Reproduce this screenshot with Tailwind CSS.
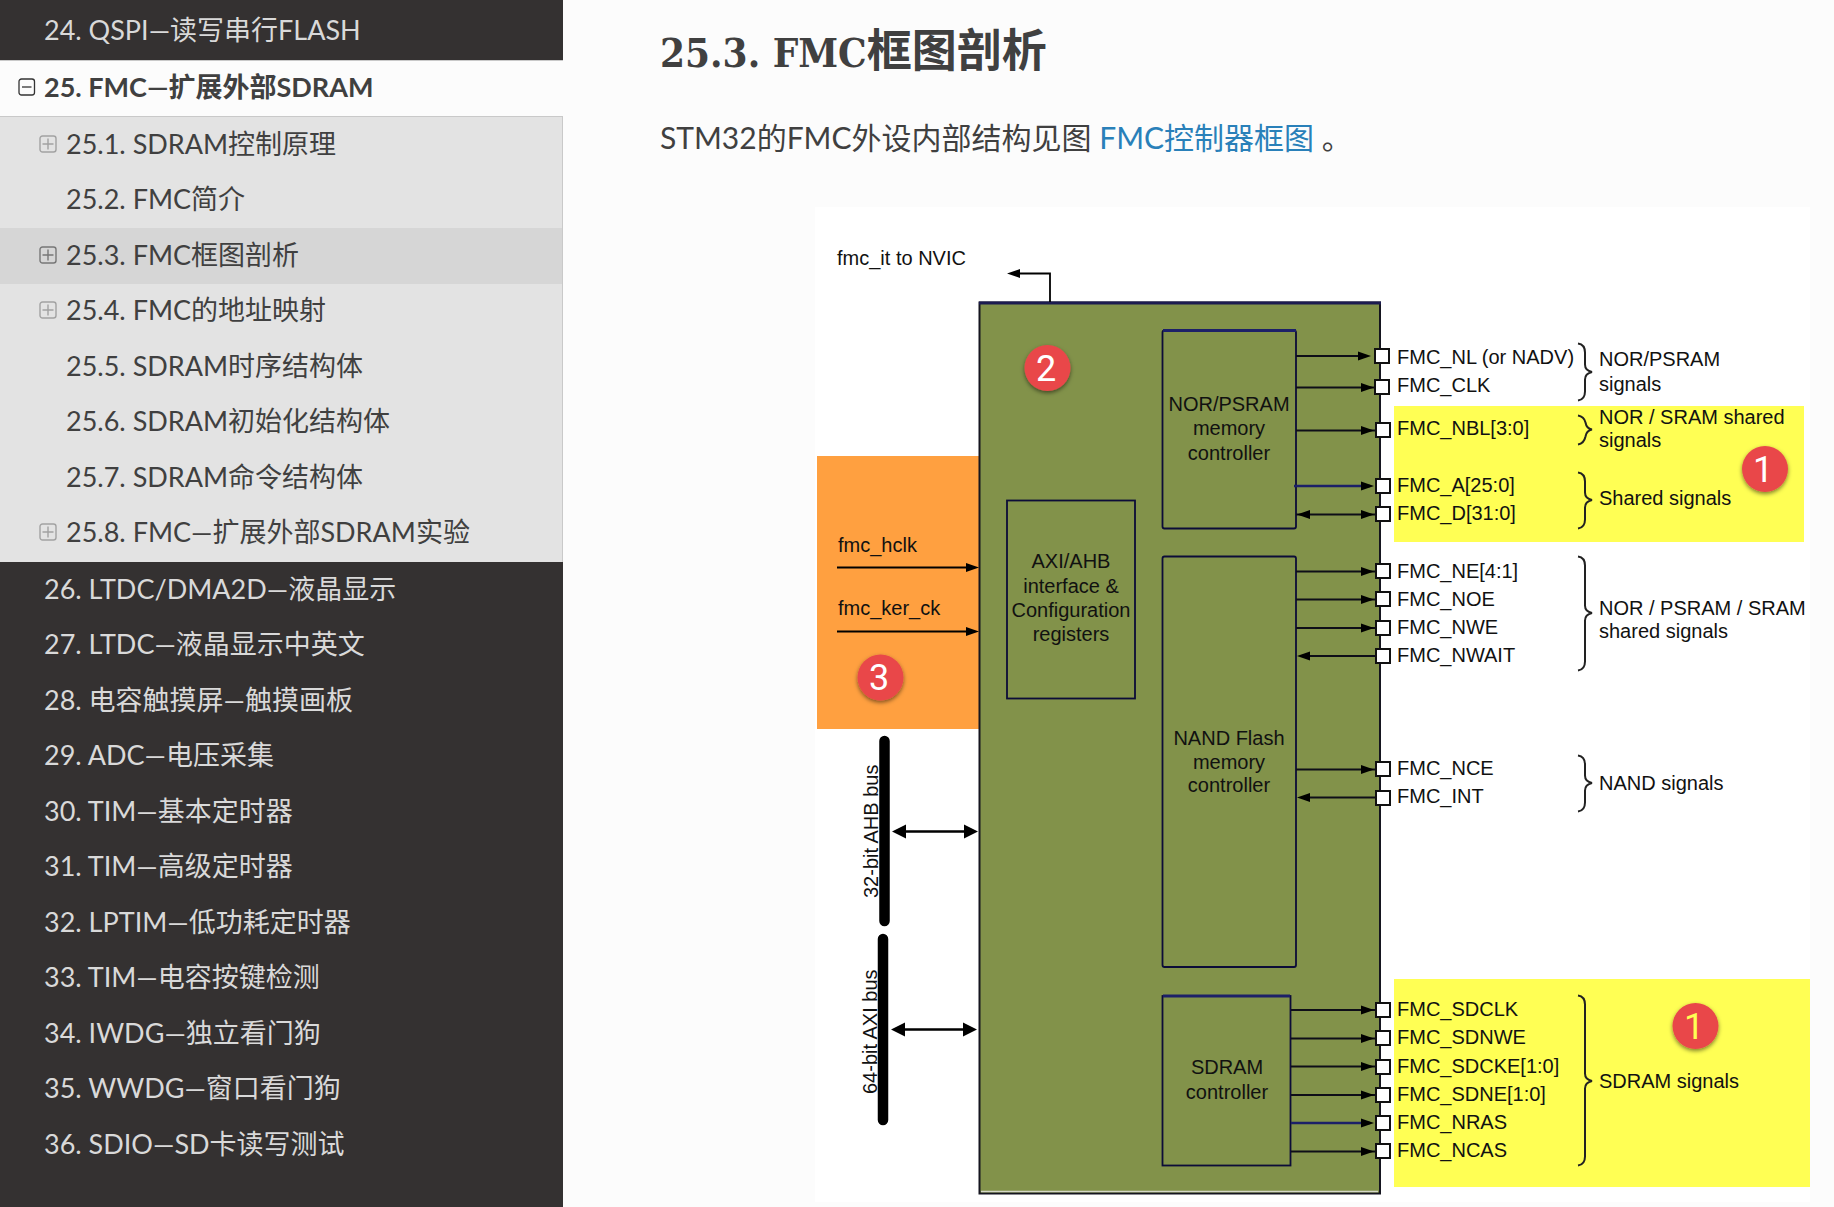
<!DOCTYPE html>
<html lang="zh-CN">
<head>
<meta charset="utf-8">
<meta name="viewport" content="width=device-width, initial-scale=1">
<title>25. FMC—扩展外部SDRAM</title>
<script src="https://cdn.jsdelivr.net/npm/@tailwindcss/browser@4"></script>
</head>
<body class="flex min-h-screen items-stretch bg-[#fcfcfc] font-[Lato,'Noto_Sans_CJK_SC',sans-serif] text-[#404040]">

<nav class="w-[563px] shrink-0 bg-[#343131] text-[27px] leading-[52px]" aria-label="目录">
  <ul>
    <li class="h-[60px] pl-11 text-[#d9d9d9]"><a href="#24" class="block leading-[60px]">24. QSPI—读写串行FLASH</a></li>
    <li>
      <div class="flex h-[57px] items-center border-y border-[#c9c9c9] bg-[#fcfcfc] pb-[3px] pl-[18px] font-bold">
        <button type="button" aria-label="折叠" class="w-[26px]">
          <svg class="block" width="18" height="18" viewBox="0 0 18 18" fill="none" stroke="#333" stroke-width="1.3"><rect x="1" y="1" width="15.5" height="16" rx="2.5"/><path d="M4 9h9.5"/></svg>
        </button>
        <a href="#25">25. FMC—扩展外部SDRAM</a>
      </div>
      <ul class="border-r border-[#c9c9c9] bg-[#e3e3e3] pb-px">
        <li class="flex items-center pb-[3px] pl-[39px] odd:h-[56px] even:h-[55px]">
          <button type="button" aria-label="展开" class="w-[27px]"><svg class="block" width="18" height="18" viewBox="0 0 18 18" fill="none" stroke="#a2a2a2" stroke-width="1.4"><rect x="1" y="1" width="16" height="16" rx="2.5"/><path d="M3.500 9h11M9 3.500v11"/></svg></button>
          <a href="#25-1">25.1. SDRAM控制原理</a></li>
        <li class="flex items-center pb-[3px] pl-[66px] odd:h-[56px] even:h-[55px]"><a href="#25-2">25.2. FMC简介</a></li>
        <li class="flex items-center bg-[#d6d6d6] pb-[3px] pl-[39px] odd:h-[56px] even:h-[55px]">
          <button type="button" aria-label="展开" class="w-[27px]"><svg class="block" width="18" height="18" viewBox="0 0 18 18" fill="none" stroke="#777" stroke-width="1.4"><rect x="1" y="1" width="16" height="16" rx="2.5"/><path d="M3.500 9h11M9 3.500v11"/></svg></button>
          <a href="#25-3">25.3. FMC框图剖析</a></li>
        <li class="flex items-center pb-[3px] pl-[39px] odd:h-[56px] even:h-[55px]">
          <button type="button" aria-label="展开" class="w-[27px]"><svg class="block" width="18" height="18" viewBox="0 0 18 18" fill="none" stroke="#a2a2a2" stroke-width="1.4"><rect x="1" y="1" width="16" height="16" rx="2.5"/><path d="M3.500 9h11M9 3.500v11"/></svg></button>
          <a href="#25-4">25.4. FMC的地址映射</a></li>
        <li class="flex items-center pb-[3px] pl-[66px] odd:h-[56px] even:h-[55px]"><a href="#25-5">25.5. SDRAM时序结构体</a></li>
        <li class="flex items-center pb-[3px] pl-[66px] odd:h-[56px] even:h-[55px]"><a href="#25-6">25.6. SDRAM初始化结构体</a></li>
        <li class="flex items-center pb-[3px] pl-[66px] odd:h-[56px] even:h-[55px]"><a href="#25-7">25.7. SDRAM命令结构体</a></li>
        <li class="flex items-center pb-[3px] pl-[39px] odd:h-[56px] even:h-[55px]">
          <button type="button" aria-label="展开" class="w-[27px]"><svg class="block" width="18" height="18" viewBox="0 0 18 18" fill="none" stroke="#a2a2a2" stroke-width="1.4"><rect x="1" y="1" width="16" height="16" rx="2.5"/><path d="M3.500 9h11M9 3.500v11"/></svg></button>
          <a href="#25-8">25.8. FMC—扩展外部SDRAM实验</a></li>
      </ul>
    </li>
  </ul>
  <ul class="text-[#d9d9d9]">
    <li class="flex items-center pb-[3px] pl-11 odd:h-[56px] even:h-[55px]"><a href="#26">26. LTDC/DMA2D—液晶显示</a></li>
    <li class="flex items-center pb-[3px] pl-11 odd:h-[56px] even:h-[55px]"><a href="#27">27. LTDC—液晶显示中英文</a></li>
    <li class="flex items-center pb-[3px] pl-11 odd:h-[56px] even:h-[55px]"><a href="#28">28. 电容触摸屏—触摸画板</a></li>
    <li class="flex items-center pb-[3px] pl-11 odd:h-[56px] even:h-[55px]"><a href="#29">29. ADC—电压采集</a></li>
    <li class="flex items-center pb-[3px] pl-11 odd:h-[56px] even:h-[55px]"><a href="#30">30. TIM—基本定时器</a></li>
    <li class="flex items-center pb-[3px] pl-11 odd:h-[56px] even:h-[55px]"><a href="#31">31. TIM—高级定时器</a></li>
    <li class="flex items-center pb-[3px] pl-11 odd:h-[56px] even:h-[55px]"><a href="#32">32. LPTIM—低功耗定时器</a></li>
    <li class="flex items-center pb-[3px] pl-11 odd:h-[56px] even:h-[55px]"><a href="#33">33. TIM—电容按键检测</a></li>
    <li class="flex items-center pb-[3px] pl-11 odd:h-[56px] even:h-[55px]"><a href="#34">34. IWDG—独立看门狗</a></li>
    <li class="flex items-center pb-[3px] pl-11 odd:h-[56px] even:h-[55px]"><a href="#35">35. WWDG—窗口看门狗</a></li>
    <li class="flex items-center pb-[3px] pl-11 odd:h-[56px] even:h-[55px]"><a href="#36">36. SDIO—SD卡读写测试</a></li>
  </ul>
</nav>

<main class="min-w-0 flex-1 pr-6 pl-[97px]">
  <h1 class="pt-[18px] text-[45px] leading-[64px] font-bold"><span class="font-['DejaVu_Serif_Condensed','DejaVu_Serif',serif] text-[40px]">25.3. FMC</span>框图剖析</h1>
  <p class="mt-[27px] text-[30px] leading-[50px]">STM32的FMC外设内部结构见图 <a href="#fmc" class="text-[#2980b9]">FMC控制器框图</a> 。</p>

  <figure id="fmc" class="mt-[45px] ml-auto max-w-[995px]">
    <svg class="block w-full font-['Liberation_Sans',Arial,sans-serif] text-[20px]" viewBox="815 207 995 995" role="img" aria-label="FMC控制器框图">
      <defs>
        <path id="hr" d="M0 0l-13-4.500v9z" fill="#000"/>
        <path id="hl" d="M0 0l13-4.500v9z" fill="#000"/>
        <rect id="pin" x="-7" y="-7" width="14" height="14" fill="#fff" stroke="#111" stroke-width="2"/>
        <filter id="shadow" x="-30%" y="-30%" width="160%" height="160%"><feDropShadow dx="0" dy="2" stdDeviation="2" flood-color="#000" flood-opacity="0.5"/></filter>
      </defs>
      <rect x="815" y="207" width="995" height="995" fill="#fff"/>
      <rect x="817" y="456" width="163" height="273" fill="#ffa040"/>
      <rect x="1394" y="406" width="410" height="136" fill="#ffff54"/>
      <rect x="1394" y="979" width="416" height="208" fill="#ffff54"/>

      <!-- controller body -->
      <rect x="979.500" y="302.500" width="400.500" height="891" fill="#82924a" stroke="#15151f" stroke-width="2"/>
      <path d="M981 1191.500H1378" stroke="#d5d8c8" stroke-width="1.500" fill="none"/>
      <path d="M979 303H1381" stroke="#1c1c50" stroke-width="3"/>
      <g fill="none" stroke="#0c0c38" stroke-width="1.800">
        <rect x="1007" y="500.500" width="128" height="198"/>
        <rect x="1162.500" y="330.500" width="133.500" height="198" rx="2"/>
        <rect x="1162.500" y="556.500" width="133.500" height="410.500" rx="2"/>
        <rect x="1162.500" y="996" width="128" height="169.500"/>
      </g>
      <path d="M1163 330.500h133M1163 996h127" stroke="#1c2068" stroke-width="3"/>

      <!-- left side links -->
      <g fill="none" stroke="#000" stroke-width="1.800">
        <path d="M1050 302V273.500H1018"/>
        <path d="M837 567.500H970M837 631.500H970"/>
        <path d="M900 831.500H970M900 1029.500H970" stroke-width="2.500"/>
      </g>
      <use href="#hl" x="1007" y="273.500"/>
      <use href="#hr" x="979" y="567.500"/><use href="#hr" x="979" y="631.500"/>
      <path d="M892 831.500l14-7v14zM978 831.500l-14-7v14zM891 1029.500l14-7v14zM977 1029.500l-14-7v14z"/>

      <!-- signal links -->
      <g stroke="#0e0e18" stroke-width="1.800">
        <path d="M1296 356H1365M1296 387.500H1376M1296 430.500H1376M1296 514.500H1376M1296 571.500H1376M1296 599.500H1376M1296 628H1376M1304 656H1376M1296 769.500H1376M1304 797.500H1376"/>
        <path d="M1291 1010H1376M1291 1038.500H1376M1291 1066.500H1376M1291 1095H1376M1291 1151.500H1376"/>
        <path d="M1294 486H1370M1291 1123H1370" stroke="#1c2068" stroke-width="2.600"/>
      </g>
      <use href="#hr" x="1371" y="356"/><use href="#hr" x="1374" y="387.500"/><use href="#hr" x="1374" y="430.500"/><use href="#hr" x="1374" y="486"/><use href="#hr" x="1374" y="514.500"/>
      <use href="#hr" x="1374" y="571.500"/><use href="#hr" x="1374" y="599.500"/><use href="#hr" x="1374" y="628"/><use href="#hr" x="1374" y="769.500"/>
      <use href="#hr" x="1374" y="1010"/><use href="#hr" x="1374" y="1038.500"/><use href="#hr" x="1374" y="1066.500"/><use href="#hr" x="1374" y="1095"/><use href="#hr" x="1374" y="1123"/><use href="#hr" x="1374" y="1151.500"/>
      <use href="#hl" x="1297" y="514.500"/><use href="#hl" x="1297" y="656"/><use href="#hl" x="1297" y="797.500"/>
      <use href="#pin" x="1382" y="356"/><use href="#pin" x="1382" y="387"/><use href="#pin" x="1383" y="430"/><use href="#pin" x="1383" y="486"/><use href="#pin" x="1383" y="514"/>
      <use href="#pin" x="1383" y="571"/><use href="#pin" x="1383" y="599"/><use href="#pin" x="1383" y="628"/><use href="#pin" x="1383" y="656"/><use href="#pin" x="1383" y="769"/><use href="#pin" x="1383" y="798"/>
      <use href="#pin" x="1383" y="1010"/><use href="#pin" x="1383" y="1038"/><use href="#pin" x="1383" y="1067"/><use href="#pin" x="1383" y="1095"/><use href="#pin" x="1383" y="1123"/><use href="#pin" x="1383" y="1151"/>

      <!-- braces -->
      <g fill="none" stroke="#222" stroke-width="2">
        <path d="M1578 343.500q7 1 7 9v12q0 6 7 7.500q-7 1.500-7 7.500v12q0 8-7 9"/>
        <path d="M1578 415.500q6 1 7.500 7q1 6 6.500 7q-5.500 1-6.500 7q-1.500 7-7.500 8"/>
        <path d="M1578 472.500q7 1 7 9v11q0 6 7 7.500q-7 1.500-7 7.500v12q0 8-7 9"/>
        <path d="M1578 556.500q7 1 7 9v40q0 6 7 7.500q-7 1.500-7 7.500v41q0 8-7 9"/>
        <path d="M1578 755.500q7 1 7 9v11q0 6 7 7.500q-7 1.500-7 7.500v12q0 8-7 9"/>
        <path d="M1578 995.500q7 1 7 9v69q0 6 7 7.500q-7 1.500-7 7.500v68q0 8-7 9"/>
      </g>

      <g fill="#111">
        <text x="837" y="265">fmc_it to NVIC</text>
        <text x="838" y="552">fmc_hclk</text>
        <text x="838" y="615">fmc_ker_ck</text>
        <text transform="translate(878 898) rotate(-90)">32-bit AHB bus</text>
        <text transform="translate(877 1094) rotate(-90)">64-bit AXI bus</text>

        <g text-anchor="middle">
          <text x="1071" y="568">AXI/AHB</text><text x="1071" y="593">interface &amp;</text><text x="1071" y="617">Configuration</text><text x="1071" y="641">registers</text>
          <text x="1229" y="411">NOR/PSRAM</text><text x="1229" y="435">memory</text><text x="1229" y="460">controller</text>
          <text x="1229" y="745">NAND Flash</text><text x="1229" y="769">memory</text><text x="1229" y="792">controller</text>
          <text x="1227" y="1074">SDRAM</text><text x="1227" y="1099">controller</text>
        </g>

        <text x="1397" y="364">FMC_NL (or NADV)</text>
        <text x="1397" y="392">FMC_CLK</text>
        <text x="1397" y="435">FMC_NBL[3:0]</text>
        <text x="1397" y="492">FMC_A[25:0]</text>
        <text x="1397" y="520">FMC_D[31:0]</text>
        <text x="1397" y="578">FMC_NE[4:1]</text>
        <text x="1397" y="606">FMC_NOE</text>
        <text x="1397" y="634">FMC_NWE</text>
        <text x="1397" y="662">FMC_NWAIT</text>
        <text x="1397" y="775">FMC_NCE</text>
        <text x="1397" y="803">FMC_INT</text>
        <text x="1397" y="1016">FMC_SDCLK</text>
        <text x="1397" y="1044">FMC_SDNWE</text>
        <text x="1397" y="1073">FMC_SDCKE[1:0]</text>
        <text x="1397" y="1101">FMC_SDNE[1:0]</text>
        <text x="1397" y="1129">FMC_NRAS</text>
        <text x="1397" y="1157">FMC_NCAS</text>

        <text x="1599" y="366">NOR/PSRAM</text><text x="1599" y="391">signals</text>
        <text x="1599" y="424">NOR / SRAM shared</text><text x="1599" y="447">signals</text>
        <text x="1599" y="505">Shared signals</text>
        <text x="1599" y="615">NOR / PSRAM / SRAM</text><text x="1599" y="638">shared signals</text>
        <text x="1599" y="790">NAND signals</text>
        <text x="1599" y="1088">SDRAM signals</text>
      </g>

      <path d="M884.500 741V921M883 939V1120" stroke="#000" stroke-width="10.500" stroke-linecap="round"/>

      <!-- numbered badges -->
      <g fill="#e9474a" filter="url(#shadow)">
        <circle cx="1047.500" cy="368" r="23"/><circle cx="880.500" cy="677.500" r="23"/><circle cx="1765" cy="469" r="23"/><circle cx="1695.500" cy="1026" r="23"/>
      </g>
      <g class="font-[Roboto,sans-serif] text-[36px]" fill="#fff" text-anchor="middle">
        <text x="1046" y="381">2</text>
        <text x="879" y="690">3</text>
        <text x="1763" y="482">1</text>
        <text x="1694" y="1039" fill="#ffff54">1</text>
      </g>
    </svg>
  </figure>
</main>
</body>
</html>
